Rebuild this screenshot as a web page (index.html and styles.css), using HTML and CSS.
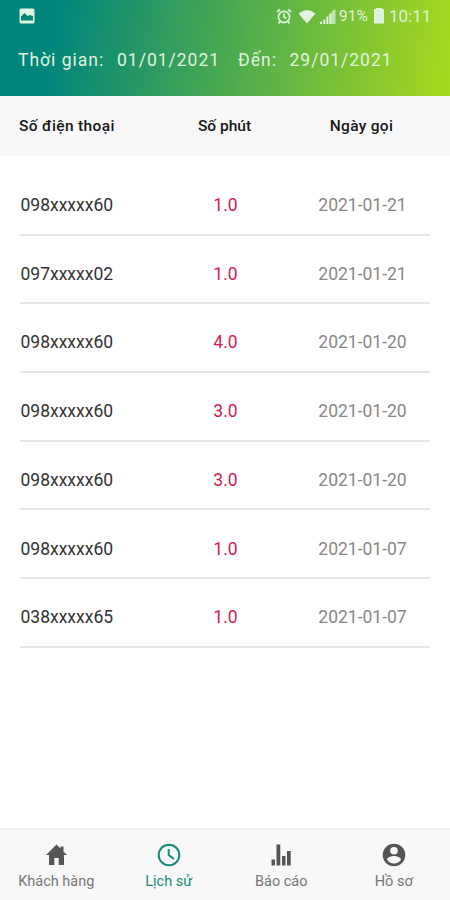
FILE: index.html
```html
<!DOCTYPE html>
<html lang="vi">
<head>
<meta charset="utf-8">
<title>Lịch sử</title>
<link rel="stylesheet" href="styles.css">
</head>
<body>
<div class="app">
  <header class="top">
    <div class="status">
      <svg class="picture" width="16" height="16" viewBox="0 0 16 16"><path fill="currentColor" fill-rule="evenodd" d="M2 .5h12A1.500 1.500 0 0 1 15.500 2v12a1.500 1.500 0 0 1-1.500 1.500H2A1.500 1.500 0 0 1 .5 14V2A1.500 1.500 0 0 1 2 .5zM2 12.500h12V8l-3-1-2.500 1L5.500 5 2 8.500z"/></svg>
      <svg class="alarm" width="16" height="17" viewBox="0 0 16 17" fill="none" stroke="currentColor" stroke-width="1.700"><circle cx="8" cy="9" r="5.600"/><path d="M8 5.500V9l2.500 1.500M1 4l3-2.500M15 4l-3-2.500M4 13.500l-1.500 2M12 13.500l1.500 2"/></svg>
      <svg class="wifi" width="18" height="15" viewBox="0 0 18 15"><path fill="currentColor" d="M.5 4.500Q9-2.500 17.500 4.500L9 14.500z"/></svg>
      <svg class="signal" width="16" height="15" viewBox="0 0 16 15" fill="currentColor"><path d="M0 12.800h2V15H0zM3.300 10.800h2V15h-2zM6.400 7.500h2V15h-2zM9.300 4.500h2.300V15H9.300z"/><path opacity=".7" d="M11.600 2.500 15.500 0v15h-3.900z"/></svg>
      <span class="percent">91%</span>
      <svg class="battery" width="10" height="16" viewBox="0 0 10 16"><path fill="currentColor" d="M2 0h6v1h1.500a.5.5 0 0 1 .5.500V15a.5.500 0 0 1-.5.500H.5A.5.500 0 0 1 0 15V1.500A.5.500 0 0 1 .5 1H2z"/></svg>
      <span class="clock">10:11</span>
    </div>
    <div class="range">
      <span class="from-label">Thời gian:</span><span class="from">01/01/2021</span><span class="to-label">Đến:</span><span class="to">29/01/2021</span>
    </div>
  </header>
  <div class="grid heads"><span class="phone-head">Số điện thoại</span><span>Số phút</span><span class="date-head">Ngày gọi</span></div>
  <main class="list">
    <div class="grid row"><span>098xxxxx60</span><span class="mins">1.0</span><span class="date">2021-01-21</span></div>
    <div class="grid row"><span>097xxxxx02</span><span class="mins">1.0</span><span class="date">2021-01-21</span></div>
    <div class="grid row"><span>098xxxxx60</span><span class="mins">4.0</span><span class="date">2021-01-20</span></div>
    <div class="grid row"><span>098xxxxx60</span><span class="mins">3.0</span><span class="date">2021-01-20</span></div>
    <div class="grid row"><span>098xxxxx60</span><span class="mins">3.0</span><span class="date">2021-01-20</span></div>
    <div class="grid row"><span>098xxxxx60</span><span class="mins">1.0</span><span class="date">2021-01-07</span></div>
    <div class="grid row"><span>038xxxxx65</span><span class="mins">1.0</span><span class="date">2021-01-07</span></div>
  </main>
  <nav class="tabs">
    <a class="tab"><svg width="24" height="24" viewBox="0 0 24 24"><path fill="currentColor" d="M12.500 1.500 2 12h3v10h5.300v-7h4.400v7H20V12h3l-3.500-3.500V3.500h-3v2z"/></svg><span>Khách hàng</span></a>
    <a class="tab active"><svg width="24" height="24" viewBox="0 0 24 24" fill="none" stroke="currentColor" stroke-width="2"><circle cx="12" cy="12" r="10.300"/><path d="M11.700 6v6l5.300 4"/></svg><span>Lịch sử</span></a>
    <a class="tab"><svg width="24" height="24" viewBox="0 0 24 24"><path fill="currentColor" d="M2.500 16.500H6v6H2.500zM7.500 1.500h3.800v21H7.500zM13 13h3.500v9.500H13zM18 8h3.700v14.500H18z"/></svg><span>Báo cáo</span></a>
    <a class="tab"><svg width="24" height="24" viewBox="0 0 24 24"><path fill="currentColor" fill-rule="evenodd" d="M12 .7a11.300 11.300 0 1 0 0 22.600A11.300 11.300 0 0 0 12 .7zM12 4a3.800 3.800 0 1 1 0 7.600A3.800 3.800 0 0 1 12 4zm0 16.500c-3 0-5.500-1.500-7-3.800.1-2.300 4.700-3.600 7-3.600s6.900 1.300 7 3.600c-1.500 2.300-4 3.800-7 3.800z"/></svg><span>Hồ sơ</span></a>
  </nav>
</div>
</body>
</html>
```
FILE: styles.css
```css
* { box-sizing: border-box; }
body { margin: 0; background: #fff; font-family: Roboto, sans-serif; }
svg { display: block; flex: none; }
.app { width: 450px; height: 900px; display: flex; flex-direction: column; overflow: hidden; }
.top { height: 96px; flex: none; color: #e0f3df; background: linear-gradient(98deg, #00857c 12%, #4baa50 51%, #a5d720 98%); }
.status { height: 32px; display: flex; align-items: center; padding-left: 19px; }
.alarm { margin-left: 241px; }
.wifi { margin-left: 6px; }
.signal { margin-left: 4px; }
.percent { width: 30px; margin-left: 3px; font-size: 15.5px; white-space: nowrap; }
.battery { margin-left: 5px; }
.clock { margin-left: 5px; font-size: 17px; white-space: nowrap; }
.range { display: flex; padding-left: 18px; margin-top: 16px; font-size: 17.5px; line-height: 24px; letter-spacing: 1px; white-space: nowrap; }
.from-label { width: 99px; }
.from { width: 121px; }
.to-label { width: 51.5px; }
.grid { display: grid; grid-template-columns: 137px 137px 137px; align-items: center; text-align: center; }
.grid > :first-child { text-align: left; }
.heads { height: 60px; flex: none; padding-left: 19px; background: #f8f8f8; color: #171717; font-size: 15.5px; font-weight: 500; }
.phone-head { letter-spacing: .35px; }
.date-head { letter-spacing: .3px; }
.list { flex: 1; padding: 11px 20px 0; }
.row { height: 68.7px; border-bottom: 2px solid #e6e6e6; padding-top: 9.5px; color: #333; font-size: 17.5px; }
.row > :first-child { padding-left: .5px; }
.mins { color: #d3204f; }
.date { color: #888; }
.tabs { height: 72px; flex: none; display: grid; grid-template-columns: repeat(4, 1fr); border-top: 2px solid #eee; background: #f8f8f8; }
.tab { display: flex; flex-direction: column; align-items: center; padding-top: 13px; color: #555; font-size: 14.5px; line-height: 20px; }
.tab span { margin-top: 5px; color: #777; }
.tab.active, .tab.active span { color: #158b78; }
```
